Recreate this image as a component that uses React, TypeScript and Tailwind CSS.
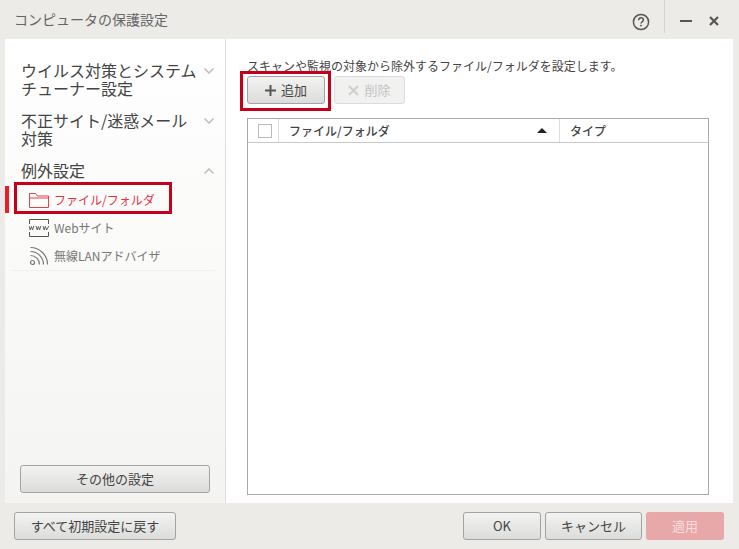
import React from "react";

const btn =
  "flex items-center justify-center rounded-[3px] border border-[#a3a3a3] bg-gradient-to-b from-[#f3f3f2] to-[#dcdcdb] text-[13px] text-[#444]";

function NavHead({ lines, up, chevronTop }: { lines: string[]; up?: boolean; chevronTop: string }) {
  return (
    <div className="flex justify-between pl-[16px] pr-[11px]">
      <div className="text-[16px] leading-[18px] text-[#444]">
        {lines.map((l) => (
          <div key={l}>{l}</div>
        ))}
      </div>
      <svg width="10" height="6" viewBox="0 0 10 6" fill="none" className={chevronTop}>
        <path d={up ? "M.5 5.500L5 1l4.500 4.500" : "M.5.500L5 5 9.500.500"} stroke="#bdbdbd" strokeWidth="1.5" />
      </svg>
    </div>
  );
}

export default function App() {
  return (
    <div
      className="flex h-[549px] w-[739px] flex-col overflow-hidden bg-[#ecebe8]"
      style={{ fontFamily: '"Noto Sans CJK JP", "Liberation Sans", sans-serif' }}
    >
      {/* Title bar */}
      <div className="flex h-[39px] shrink-0 items-start justify-between">
        <div className="pl-[14px] pt-[9px] text-[14px] leading-[20px] text-[#666]">
          コンピュータの保護設定
        </div>
        <div className="flex items-start">
          <svg width="20" height="20" viewBox="0 0 20 20" className="mt-[12px] mr-[13px]" fill="none">
            <circle cx="10" cy="10" r="7.6" stroke="#555" strokeWidth="1.5" />
            <path d="M7.6 8.2c0-1.6 1.1-2.4 2.4-2.4s2.4.8 2.4 2.2c0 1.7-2.400 1.800-2.400 3.600" stroke="#555" strokeWidth="1.5" />
            <rect x="9.2" y="12.8" width="1.6" height="1.6" fill="#555" />
          </svg>
          <div className="h-[33px] w-px bg-[#d4d4d2]" />
          <div className="mt-[20px] ml-[15px] h-[2px] w-[12px] bg-[#555]" />
          <svg width="12" height="12" viewBox="0 0 12 12" className="mt-[15px] ml-[16px] mr-[19px]">
            <path d="M2 2l8 8M10 2l-8 8" stroke="#555" strokeWidth="2.2" />
          </svg>
        </div>
      </div>

      {/* Body */}
      <div className="mx-[5px] mr-[6px] flex h-[464px] shrink-0 bg-white">
        {/* Sidebar */}
        <div className="flex w-[221px] shrink-0 flex-col border-r border-[#dedede] bg-gradient-to-b from-white to-[#f4f4f2] pt-[22px]">
          <NavHead lines={["ウイルス対策とシステム", "チューナー設定"]} chevronTop="mt-[7px]" />
          <div className="mt-[14px]">
            <NavHead lines={["不正サイト/迷惑メール", "対策"]} chevronTop="mt-[7px]" />
          </div>
          <div className="mt-[14px]">
            <NavHead lines={["例外設定"]} up chevronTop="mt-[7px]" />
          </div>
          <div className="relative mt-[7px] flex h-[28px] items-center pl-[24px] text-[12px] text-[#e8303f]">
            <div className="absolute left-0 top-0 h-[27px] w-[4px] bg-[#ee1c25]" />
            <svg width="20" height="16" viewBox="0 0 20 16" fill="none" className="mr-[5px]" stroke="#e2404c">
              <path d="M.5 15.500V1.500h6l2 2.500h11v11.500zM.5 6h19" />
            </svg>
            ファイル/フォルダ
            <div className="absolute left-[9px] top-[-4px] h-[32px] w-[158px] border-[3px] border-[#c4001a]" />
          </div>
          <div className="flex h-[28px] items-center pl-[24px] text-[12px] text-[#777]">
            <svg width="20" height="18" viewBox="0 0 20 18" fill="none" className="mr-[5px]" stroke="#555">
              <path d="M.5 5V.5h19V5M.5 13v4.500h19V13" />
              <path d="M0 7l1.200 4 1.200-3.500L3.600 11l1.200-4M7 7l1.200 4 1.200-3.500 1.200 3.500 1.200-4M14 7l1.200 4 1.200-3.500 1.200 3.500L19.800 7" strokeWidth="0.9" />
            </svg>
            Webサイト
          </div>
          <div className="flex h-[28px] items-center pl-[24px] text-[12px] text-[#777]">
            <svg width="20" height="20" viewBox="0 0 20 20" fill="none" className="mr-[5px]" stroke="#777" strokeWidth="1.2">
              <circle cx="3.500" cy="16.500" r="2" />
              <path d="M1.500 9.500a9 9 0 0 1 9 9M1.500 5.500a13 13 0 0 1 13 13M1.500 1.500a17 17 0 0 1 17 17" />
            </svg>
            無線LANアドバイザ
          </div>
          <div className="ml-[5px] mr-[10px] h-px bg-[#f0f0ee]" />
          <div className="mt-auto mb-[10px] px-[15px]">
            <div className={`${btn} h-[28px] w-[190px]`}>その他の設定</div>
          </div>
        </div>

        {/* Main */}
        <div className="flex min-w-0 flex-1 flex-col pl-[21px] pr-[24px] pt-[18px]">
          <div className="text-[12px] leading-[17px] whitespace-nowrap text-[#444]">
            スキャンや監視の対象から除外するファイル/フォルダを設定します。
          </div>
          <div className="mt-[2px] flex gap-[9px]">
            <div className="relative">
              <div className={`${btn} h-[28px] w-[78px]`}>
                <svg width="11" height="11" viewBox="0 0 11 11" className="mr-[5px]">
                  <path d="M5.500 0v11M0 5.500h11" stroke="#555" strokeWidth="2" />
                </svg>
                追加
              </div>
              <div className="absolute left-[-7px] top-[-5px] h-[40px] w-[91px] border-[3px] border-[#c4001a]" />
            </div>
            <div className="flex h-[28px] w-[71px] items-center justify-center rounded-[3px] border border-[#dcdcdc] bg-[#f1f1f0] text-[13px] text-[#c4c4c4]">
              <svg width="11" height="11" viewBox="0 0 11 11" className="mr-[5px]">
                <path d="M1 1l9 9M10 1l-9 9" stroke="#cfcfcf" strokeWidth="2" />
              </svg>
              削除
            </div>
          </div>
          <div className="mt-[14px] flex h-[377px] flex-col border border-[#aaa]">
            <div className="flex h-[24px] shrink-0 items-center border-b border-[#c8c8c8] text-[12px] font-medium text-[#444]">
              <div className="flex h-full w-[31px] items-center justify-center border-r border-[#ddd] pl-[3px]">
                <div className="h-[14px] w-[14px] border border-[#bbb]" />
              </div>
              <div className="flex h-full w-[281px] items-center justify-between border-r border-[#ddd] pl-[10px] pr-[12px]">
                <span>ファイル/フォルダ</span>
                <div className="h-0 w-0 border-x-[5px] border-b-[5px] border-x-transparent border-b-[#222]" />
              </div>
              <div className="pl-[10px]">タイプ</div>
            </div>
          </div>
        </div>
      </div>

      {/* Footer */}
      <div className="flex flex-1 items-start justify-between pl-[14px] pr-[15px] pt-[9px]">
        <div className={`${btn} h-[28px] w-[162px]`}>すべて初期設定に戻す</div>
        <div className="flex gap-[4px]">
          <div className={`${btn} h-[28px] w-[78px]`}>OK</div>
          <div className={`${btn} h-[28px] w-[97px]`}>キャンセル</div>
          <div className="flex h-[28px] w-[78px] items-center justify-center rounded-[3px] bg-[#e8a8aa] text-[13px] text-[#f6dcdc]">
            適用
          </div>
        </div>
      </div>
    </div>
  );
}
